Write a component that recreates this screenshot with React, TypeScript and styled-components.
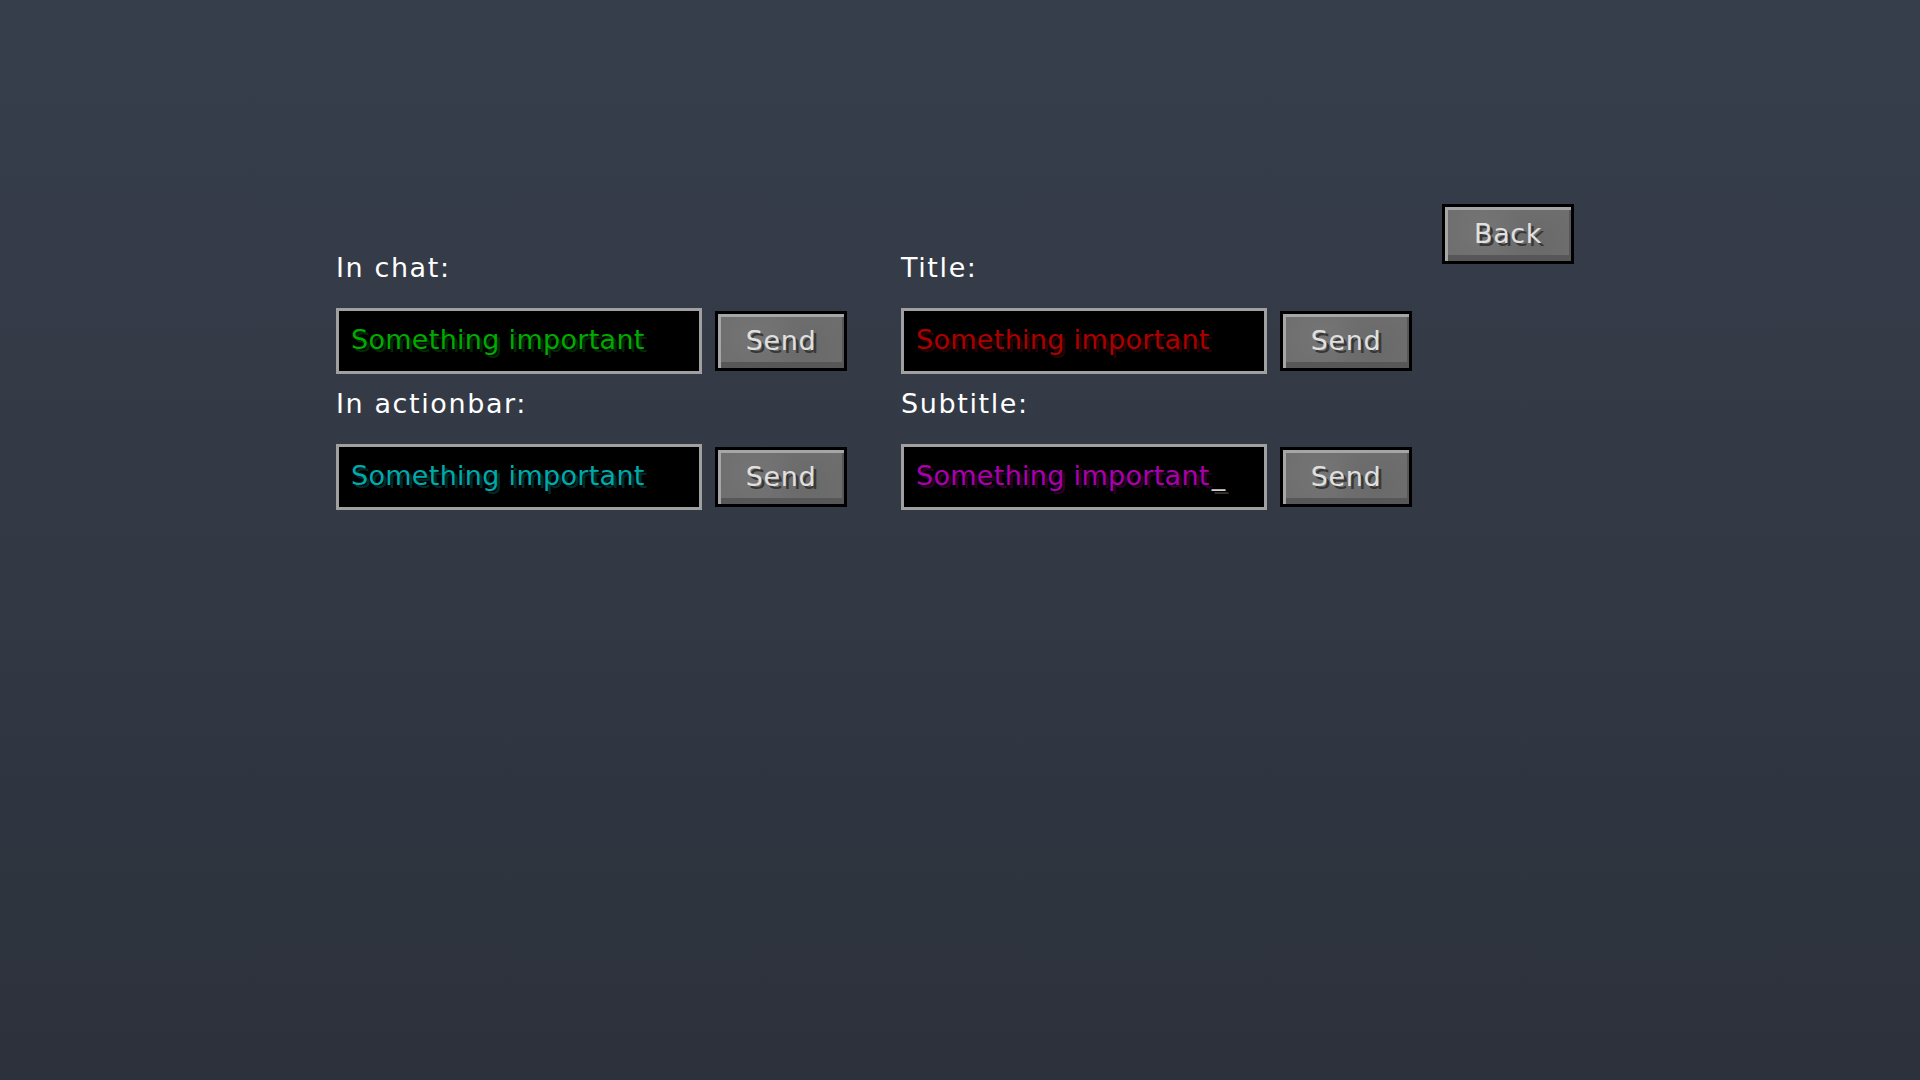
import React from 'react';
import styled, {createGlobalStyle} from 'styled-components';

const GlobalStyle = createGlobalStyle`
  html, body {
    margin: 0;
    padding: 0;
    height: 100%;
  }
  body {
    background: linear-gradient(180deg, #373e4b 0%, #333a46 45%, #2c313b 100%);
    font-family: "DejaVu Sans", "Liberation Sans", sans-serif;
    overflow: hidden;
  }
  #root {
    height: 100%;
  }
`

interface IMessageField {
    label: string,
    value: string,
    color: string,
    shadow: string,
    focused?: boolean
}

const fields: IMessageField[][] = [
    [
        {label: 'In chat:', value: 'Something important', color: '#00aa00', shadow: '#002a00'},
        {label: 'In actionbar:', value: 'Something important', color: '#00aaaa', shadow: '#002a2a'},
    ],
    [
        {label: 'Title:', value: 'Something important', color: '#aa0000', shadow: '#2a0000'},
        {label: 'Subtitle:', value: 'Something important', color: '#aa00aa', shadow: '#2a002a', focused: true},
    ],
]

export default function App() {
    return (
        <>
            <GlobalStyle/>
            <Screen>
                <Columns>
                    {fields.map((column, ci) => (
                        <Column key={`col-${ci}`}>
                            {column.map((f, i) => (
                                <Group key={`field-${ci}-${i}`}>
                                    <Label>{f.label}</Label>
                                    <Row>
                                        <TextField>
                                            <FieldText $color={f.color} $shadow={f.shadow}>{f.value}</FieldText>
                                            {f.focused ? <Cursor>_</Cursor> : null}
                                        </TextField>
                                        <McButton>Send</McButton>
                                    </Row>
                                </Group>
                            ))}
                        </Column>
                    ))}
                </Columns>
                <McButton>Back</McButton>
            </Screen>
        </>
    )
}

const Screen = styled.div`
  display: flex;
  align-items: flex-start;
  padding: 204px 0 0 336px;
  gap: 30px;
`

const Columns = styled.div`
  display: flex;
  gap: 54px;
  margin-top: 49px;
`

const Column = styled.div`
  display: flex;
  flex-direction: column;
  gap: 15px;
`

const Group = styled.div`
  display: flex;
  flex-direction: column;
  gap: 25px;
`

const Label = styled.div`
  color: #ffffff;
  font-size: 27px;
  line-height: 30px;
  height: 30px;
  letter-spacing: 1.6px;
`

const Row = styled.div`
  display: flex;
  align-items: center;
  gap: 13px;
`

const TextField = styled.div`
  box-sizing: border-box;
  width: 366px;
  height: 66px;
  border: 3px solid #a0a0a0;
  background: #000000;
  display: flex;
  align-items: center;
  padding: 0 0 2px 12px;
  white-space: pre;
`

const FieldText = styled.span<{ $color: string, $shadow: string }>`
  color: ${p => p.$color};
  text-shadow: 3px 3px 0 ${p => p.$shadow};
  font-size: 27px;
  line-height: 30px;
  letter-spacing: 0.3px;
`

const Cursor = styled.span`
  color: #d0d0d0;
  text-shadow: 3px 3px 0 #343434;
  font-size: 27px;
  line-height: 30px;
  margin-left: 2px;
`

const McButton = styled.button`
  box-sizing: border-box;
  width: 132px;
  height: 60px;
  flex: none;
  border: 3px solid #000000;
  background-color: #6f6f6f;
  background-image: radial-gradient(circle at 30% 40%, rgba(255, 255, 255, 0.04), transparent 40%),
  radial-gradient(circle at 75% 65%, rgba(0, 0, 0, 0.05), transparent 45%);
  box-shadow: inset 3px 3px 0 #a6a6a6, inset -2px -6px 0 #575757;
  color: #e0e0e0;
  text-shadow: 3px 3px 0 #383838;
  font-family: "DejaVu Sans", "Liberation Sans", sans-serif;
  font-size: 27px;
  line-height: 30px;
  letter-spacing: 0.6px;
  padding: 0;
  display: flex;
  align-items: center;
  justify-content: center;
  cursor: pointer;
`
